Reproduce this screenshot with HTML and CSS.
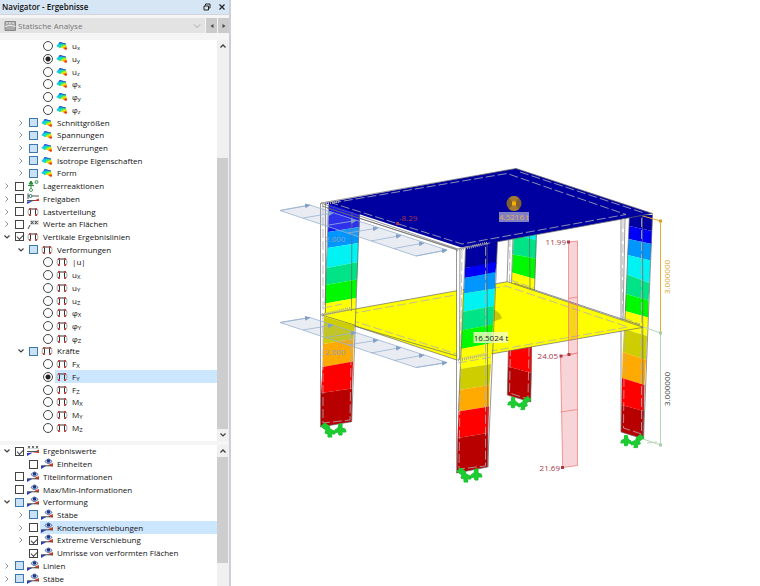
FILE: index.html
```html
<!DOCTYPE html>
<html lang="de">
<head>
<meta charset="utf-8">
<title>Navigator - Ergebnisse</title>
<link rel="stylesheet" href="styles.css">
</head>
<body>
<svg class="defs" aria-hidden="true">
  <defs>
    <linearGradient id="rainbow" x1="0.2" y1="0" x2="0.8" y2="1">
      <stop offset="0.1" stop-color="#1a30e0"/><stop offset="0.25" stop-color="#00c8f0"/><stop offset="0.45" stop-color="#20e880"/><stop offset="0.65" stop-color="#f0f000"/><stop offset="0.9" stop-color="#f03000"/>
    </linearGradient>
    <symbol id="i-surf" viewBox="0 0 12 12"><path d="M0.5 6 4 2 10 4 11 9 10 10 6.500 8 4 8z" fill="url(#rainbow)"/><path d="M3.500 2.500 10 4" stroke="#3050d0"/><path d="M0.500 6 3 4.500 5 7 4 8z" fill="#10d0e8"/></symbol>
    <symbol id="i-frame" viewBox="0 0 12 12"><path d="M3.500 9V3H8.500V9" fill="none" stroke="#333"/><path d="M1.500 3Q0.500 6 1.500 9M10.500 3Q11.500 6 10.500 9" fill="none" stroke="#aaa"/><path d="M2 2h2v2H2zM8 2h2v2H8zM2 8h2v2H2zM8 8h2v2H8z" fill="#b84a4a"/></symbol>
    <symbol id="i-support" viewBox="0 0 12 12"><path d="M4 8V1M4 1 2 4h4zM1 5.500h6" stroke="#2b8a3e" fill="#2b8a3e"/><circle cx="9.500" cy="2" r="1.500" fill="#cfe8d4" stroke="#4c9a5c"/><circle cx="4" cy="10" r="1.500" fill="#fff" stroke="#4c9a5c"/></symbol>
    <symbol id="i-release" viewBox="0 0 12 12"><path d="M1 0.500V6M1 3H12M0 7.500H12" stroke="#555" fill="none"/><circle cx="3.500" cy="3" r="1.500" fill="#fff" stroke="#2b7a70"/><path d="M0 11V8.500L6 8z" fill="#2040d0"/><path d="M6 8 12 5.500V8z" fill="#d03020"/></symbol>
    <symbol id="i-values" viewBox="0 0 12 12"><path d="M3 2H12V7H3z" fill="#ddd"/><path d="M4 3 6.500 6M6.500 3 4 6M8 3 10.500 6M10.500 3 8 6M3 7 1 11" stroke="#444" fill="none"/></symbol>
    <symbol id="i-result" viewBox="0 0 12 12"><path d="M0 11V8L6 7.500z" fill="#2438d0"/><path d="M6 7.500 12 5V8.500z" fill="#e03818"/><path d="M0 7.800H12" stroke="#555"/><path d="M4 3.500Q7.500-1.500 11 3.500 7.500 7.500 4 3.500z" fill="#dce4f4" stroke="#5068a0"/><circle cx="7.500" cy="3" r="1.800" fill="#203888"/></symbol>
    <symbol id="i-xxx" viewBox="0 0 12 12"><path d="M0 11V8L6 7.500z" fill="#2438d0"/><path d="M6 7.500 12 4.500V8z" fill="#e03818"/><path d="M0 6.500H12" stroke="#555"/><path d="M1 1 3 3.500M3 1 1 3.500M5 1 7 3.500M7 1 5 3.500M9 1 11 3.500M11 1 9 3.500" stroke="#333" stroke-width="0.800"/></symbol>
    <symbol id="i-right" viewBox="0 0 8 8"><path d="M2.500 1.500 5 4 2.500 6.500" fill="none" stroke="#909090"/></symbol>
    <symbol id="i-down" viewBox="0 0 8 8"><path d="M1.500 2.500 4 5 6.500 2.500" fill="none" stroke="#404040" stroke-width="1.200"/></symbol>
    <symbol id="i-up" viewBox="0 0 8 8"><path d="M1.500 5.500 4 3 6.500 5.500" fill="none" stroke="#404040" stroke-width="1.300"/></symbol>
    <symbol id="s-support" viewBox="0 0 30 16"><g fill="#1ccc30" stroke="#16c42c"><path d="M1 3 5 0 9 3 10 6 14 8 15 11 11 11 12 14 8 14 8 11 5 10 6 7 3 5z"/><path d="M19 1 22 1 22 5 25 6 26 9 22 9 22 12 19 12 18 9 14 10 15 7 18 5z"/></g></symbol>
    <marker id="head" markerUnits="userSpaceOnUse" markerWidth="6" markerHeight="6" refX="5" refY="2.500" orient="auto"><path d="M0 0 5.500 2.500 0 5z" fill="#829fc4"/></marker>
  </defs>
</svg>

<main class="app">
  <aside class="panel">
    <header class="title"><h1>Navigator - Ergebnisse</h1>
      <button type="button" aria-label="Andocken"><svg viewBox="0 0 8 8"><path d="M2.500 2.500V1H7V5H5.500M1 3H5.500V7H1z" fill="none" stroke="#222"/></svg></button>
      <button type="button" aria-label="Schließen"><svg viewBox="0 0 8 8"><path d="M1.500 1.500 6.500 6.500M6.500 1.500 1.500 6.500" stroke="#222" stroke-width="1.200"/></svg></button>
    </header>
    <div class="toolbar">
      <div class="combo">
        <svg class="combo-icon" viewBox="0 0 12 12"><path d="M1 1.500H11.500V10.500H1z" fill="#aaa" stroke="#888"/><path d="M1 6.500Q6 4 11.500 6.500M3 2V4M6 2V4M9 2V4" stroke="#eee" fill="none"/></svg>
        <select aria-label="Analyse"><option>Statische Analyse</option></select>
        <svg class="combo-arrow" viewBox="0 0 8 8"><path d="M1 2.500 4 5.500 7 2.500" fill="none" stroke="#aaa"/></svg>
      </div>
      <button type="button" class="step" aria-label="Zurück"><svg viewBox="0 0 8 8"><path d="M5.500 2V6L2.500 4z"/></svg></button>
      <button type="button" class="step" aria-label="Weiter"><svg viewBox="0 0 8 8"><path d="M2.500 2V6L5.500 4z"/></svg></button>
    </div>

    <section class="pane upper">
      <div class="tree">
        <div class="row l2"><label><input type="radio" name="d"><span><svg><use href="#i-surf"/></svg><b>u<sub>x</sub></b></span></label></div>
        <div class="row l2"><label><input type="radio" name="d" checked><span><svg><use href="#i-surf"/></svg><b>u<sub>y</sub></b></span></label></div>
        <div class="row l2"><label><input type="radio" name="d"><span><svg><use href="#i-surf"/></svg><b>u<sub>z</sub></b></span></label></div>
        <div class="row l2"><label><input type="radio" name="d"><span><svg><use href="#i-surf"/></svg><b>φ<sub>x</sub></b></span></label></div>
        <div class="row l2"><label><input type="radio" name="d"><span><svg><use href="#i-surf"/></svg><b>φ<sub>y</sub></b></span></label></div>
        <div class="row l2"><label><input type="radio" name="d"><span><svg><use href="#i-surf"/></svg><b>φ<sub>z</sub></b></span></label></div>
        <div class="row l1"><svg class="tw"><use href="#i-right"/></svg><label><input type="checkbox" class="part"><span><svg><use href="#i-surf"/></svg>Schnittgrößen</span></label></div>
        <div class="row l1"><svg class="tw"><use href="#i-right"/></svg><label><input type="checkbox" class="part"><span><svg><use href="#i-surf"/></svg>Spannungen</span></label></div>
        <div class="row l1"><svg class="tw"><use href="#i-right"/></svg><label><input type="checkbox" class="part"><span><svg><use href="#i-surf"/></svg>Verzerrungen</span></label></div>
        <div class="row l1"><svg class="tw"><use href="#i-right"/></svg><label><input type="checkbox" class="part"><span><svg><use href="#i-surf"/></svg>Isotrope Eigenschaften</span></label></div>
        <div class="row l1"><svg class="tw"><use href="#i-right"/></svg><label><input type="checkbox" class="part"><span><svg><use href="#i-surf"/></svg>Form</span></label></div>
        <div class="row"><svg class="tw"><use href="#i-right"/></svg><label><input type="checkbox"><span><svg><use href="#i-support"/></svg>Lagerreaktionen</span></label></div>
        <div class="row"><svg class="tw"><use href="#i-right"/></svg><label><input type="checkbox"><span><svg><use href="#i-release"/></svg>Freigaben</span></label></div>
        <div class="row"><svg class="tw"><use href="#i-right"/></svg><label><input type="checkbox"><span><svg><use href="#i-frame"/></svg>Lastverteilung</span></label></div>
        <div class="row"><svg class="tw"><use href="#i-right"/></svg><label><input type="checkbox"><span><svg><use href="#i-values"/></svg>Werte an Flächen</span></label></div>
        <div class="row"><svg class="tw"><use href="#i-down"/></svg><label><input type="checkbox" checked><span><svg><use href="#i-frame"/></svg>Vertikale Ergebnislinien</span></label></div>
        <div class="row l1"><svg class="tw"><use href="#i-down"/></svg><label><input type="checkbox" class="part"><span><svg><use href="#i-frame"/></svg>Verformungen</span></label></div>
        <div class="row l2"><label><input type="radio" name="r0"><span><svg><use href="#i-frame"/></svg>|u|</span></label></div>
        <div class="row l2"><label><input type="radio" name="r"><span><svg><use href="#i-frame"/></svg><b>u<sub>X</sub></b></span></label></div>
        <div class="row l2"><label><input type="radio" name="r"><span><svg><use href="#i-frame"/></svg><b>u<sub>Y</sub></b></span></label></div>
        <div class="row l2"><label><input type="radio" name="r"><span><svg><use href="#i-frame"/></svg><b>u<sub>Z</sub></b></span></label></div>
        <div class="row l2"><label><input type="radio" name="r"><span><svg><use href="#i-frame"/></svg><b>φ<sub>X</sub></b></span></label></div>
        <div class="row l2"><label><input type="radio" name="r"><span><svg><use href="#i-frame"/></svg><b>φ<sub>Y</sub></b></span></label></div>
        <div class="row l2"><label><input type="radio" name="r"><span><svg><use href="#i-frame"/></svg><b>φ<sub>Z</sub></b></span></label></div>
        <div class="row l1"><svg class="tw"><use href="#i-down"/></svg><label><input type="checkbox" class="part"><span><svg><use href="#i-frame"/></svg>Kräfte</span></label></div>
        <div class="row l2"><label><input type="radio" name="r"><span><svg><use href="#i-frame"/></svg><b>F<sub>X</sub></b></span></label></div>
        <div class="row l2 selected"><label><input type="radio" name="r" checked><span><svg><use href="#i-frame"/></svg><b>F<sub>Y</sub></b></span></label></div>
        <div class="row l2"><label><input type="radio" name="r"><span><svg><use href="#i-frame"/></svg><b>F<sub>Z</sub></b></span></label></div>
        <div class="row l2"><label><input type="radio" name="r"><span><svg><use href="#i-frame"/></svg><b>M<sub>X</sub></b></span></label></div>
        <div class="row l2"><label><input type="radio" name="r"><span><svg><use href="#i-frame"/></svg><b>M<sub>Y</sub></b></span></label></div>
        <div class="row l2"><label><input type="radio" name="r"><span><svg><use href="#i-frame"/></svg><b>M<sub>Z</sub></b></span></label></div>
      </div>
      <div class="scroll"><svg><use href="#i-up"/></svg><div class="track"><div class="thumb"></div></div><svg><use href="#i-down"/></svg></div>
    </section>

    <section class="pane lower">
      <div class="tree">
        <div class="row"><svg class="tw"><use href="#i-down"/></svg><label><input type="checkbox" checked><span><svg><use href="#i-xxx"/></svg>Ergebniswerte</span></label></div>
        <div class="row l1"><i class="tw"></i><label><input type="checkbox"><span><svg><use href="#i-result"/></svg>Einheiten</span></label></div>
        <div class="row"><i class="tw"></i><label><input type="checkbox"><span><svg><use href="#i-result"/></svg>Titelinformationen</span></label></div>
        <div class="row"><i class="tw"></i><label><input type="checkbox"><span><svg><use href="#i-result"/></svg>Max/Min-Informationen</span></label></div>
        <div class="row"><svg class="tw"><use href="#i-down"/></svg><label><input type="checkbox" class="part"><span><svg><use href="#i-result"/></svg>Verformung</span></label></div>
        <div class="row l1"><svg class="tw"><use href="#i-right"/></svg><label><input type="checkbox" class="part"><span><svg><use href="#i-result"/></svg>Stäbe</span></label></div>
        <div class="row l1 selected"><svg class="tw"><use href="#i-right"/></svg><label><input type="checkbox"><span><svg><use href="#i-result"/></svg>Knotenverschiebungen</span></label></div>
        <div class="row l1"><svg class="tw"><use href="#i-right"/></svg><label><input type="checkbox" checked><span><svg><use href="#i-result"/></svg>Extreme Verschiebung</span></label></div>
        <div class="row l1"><i class="tw"></i><label><input type="checkbox" checked><span><svg><use href="#i-result"/></svg>Umrisse von verformten Flächen</span></label></div>
        <div class="row"><svg class="tw"><use href="#i-right"/></svg><label><input type="checkbox" class="part"><span><svg><use href="#i-result"/></svg>Linien</span></label></div>
        <div class="row"><svg class="tw"><use href="#i-right"/></svg><label><input type="checkbox" class="part"><span><svg><use href="#i-result"/></svg>Stäbe</span></label></div>
      </div>
      <div class="scroll"><svg><use href="#i-up"/></svg><div class="track"><div class="thumb"></div></div></div>
    </section>
  </aside>

  <svg class="scene" viewBox="231 0 529 586" preserveAspectRatio="xMinYMin meet" role="img" aria-label="Tragwerksmodell">
    <!-- rear column -->
    <g>
      <path d="M513 230 537 228 536.500 240 513.500 236z" fill="#00f0f0"/>
      <path d="M513.500 235 536.500 240 536 258.500 513 254.500z" fill="#00e487"/>
      <path d="M513 254.500 536 258.500 535 279 512 272.500z" fill="#00f800"/>
      <path d="M512 272.500 535 279 534 300 511 290z" fill="#ff0"/>
      <path d="M508.500 340H532L531.500 373 508 366.500z" fill="#f00"/>
      <path d="M508 366.500 531.500 373 530.700 402 507.300 395z" fill="#b90000"/>
      <path class="edge" d="M508.500 238 507 283M513 236 511.500 284M529.500 230 530 290M536.500 232 534.500 290M508.500 345 507.300 395 530.700 402 531.500 345"/>
      <path class="dash" d="M510 238 509.500 282M510.500 347 509.500 393 528 399 529 348"/>
    </g>
    <!-- right column -->
    <g>
      <path d="M629.300 215H652.500L652 231 629 226z" fill="#0000a0"/>
      <path d="M629 226 652 231 651.500 244 628.500 239z" fill="#0000f8"/>
      <path d="M628.500 239 651.500 244 650.500 260.500 627.500 255z" fill="#0096ff"/>
      <path d="M627.500 255 650.500 260.500 649.500 283 627 274.500z" fill="#00f2f2"/>
      <path d="M627 274.500 649.500 283 648.500 300.500 626 294z" fill="#00e487"/>
      <path d="M626 294 648.500 300.500 648 317.500 625 311z" fill="#00f800"/>
      <path d="M625 311 648 317.500 647 336 624 329z" fill="#ff0"/>
      <path d="M624 329 647 336 646 360 622.700 352z" fill="#cdcd00"/>
      <path d="M622.700 352 646 360 644.500 385 622 378z" fill="#ffaa00"/>
      <path d="M622 378 644.500 385 644 411 621.500 405z" fill="#f00"/>
      <path d="M621.500 405 644 411 643.500 439 621 432z" fill="#b90000"/>
      <path class="edge" d="M621 218 621 432 643.500 439 652.500 214M625 218 623 320M629.300 218 625 320M642.500 216 643 435"/>
      <path class="dash" d="M623 220 622.500 320M641.500 218 641.500 434 623.500 428 624.500 330"/>
    </g>
    <!-- intermediate slab -->
    <path d="M321.700 315 507.300 281.700 643.300 327.300 456.700 360z" fill="#ff0"/>
    <path class="edge" d="M321.700 315 507.300 281.700 643.300 327.300 456.700 360zM324 317 462 357.500M514 283 640 325"/>
    <path class="dash" d="M338 316 506 286 628 327 463 356zM510 280 534 288M624 318 640 324"/>
    <path d="M492 309Q501 312 502 318.500L492 322z" fill="#c8c800"/>
    <!-- left column -->
    <g>
      <path d="M329 203 360 211 359.500 227 328 232z" fill="#1414f5"/>
      <path d="M328 232 359.500 227 358.500 243 327.500 248z" fill="#0096ff"/>
      <path d="M327.500 248 358.500 243 358 262 326.500 268z" fill="#00f2f2"/>
      <path d="M326.500 268 358 262 357 279.500 325.500 285z" fill="#00e487"/>
      <path d="M325.500 285 357 279.500 356 298 325 303.500z" fill="#00f800"/>
      <path d="M325 303.500 356 298 354.500 326 324 317z" fill="#ff0"/>
      <path d="M324 317 354.500 326 353.500 339 323 344z" fill="#cdcd00"/>
      <path d="M323 344 353.500 339 353 361.500 322.500 367z" fill="#ffaa00"/>
      <path d="M322.500 367 353 361.500 352 388.500 321 393z" fill="#f00"/>
      <path d="M321 393 352 388.500 351.700 421.700 320.700 427z" fill="#b90000"/>
      <path class="edge" d="M320.500 203V427L351.700 421.700 359.500 212M328.500 205 325 305M325.500 203 325.500 313M352 207 351.500 311M321.700 315 355 309M321.700 315 356 325.500"/>
      <path class="dash" d="M323 205V423L350 420 351.500 330M323.500 308 342 304"/>
    </g>
    <!-- roof slab -->
    <path d="M325 203 516 168.500 652.500 213.500 463 248z" fill="#0000a0"/>
    <path class="edge" d="M321 203 516 168.500 652.500 213.500 458 249zM322 206 457 250M327 208 456 249"/>
    <path class="dash" d="M332 203 507 173.500 626 214.500 462 244zM520 172 644 213"/>
    <!-- front column -->
    <g>
      <path d="M465.500 248 497.500 241 496.500 264 465 268z" fill="#0000a0"/>
      <path d="M465 268 496.500 262 495.500 273 464.500 278z" fill="#0000f8"/>
      <path d="M464.500 278 495.500 272 495 288.500 464 293.500z" fill="#0096ff"/>
      <path d="M464 293.500 495 288.500 494 306 463 312z" fill="#00f2f2"/>
      <path d="M463 312 494 306 493 324.500 462 330.500z" fill="#00e487"/>
      <path d="M462 330.500 493 324.500 492 343 461 349z" fill="#00f800"/>
      <path d="M461 349 492 343 491 364 460 369z" fill="#ff0"/>
      <path d="M460 369 491 364 489.500 385 459 390z" fill="#cdcd00"/>
      <path d="M459 390 489.500 385 489 406.500 458.500 411.500z" fill="#ffaa00"/>
      <path d="M458.500 411.500 489 406.500 488 433 457.500 438z" fill="#f00"/>
      <path d="M457.500 438 488 433 487.700 467 457 473z" fill="#b90000"/>
      <path d="M457 250H464L459 385 457.500 425z" fill="#fff"/>
      <path class="edge" d="M456.500 249V473L487.700 467 497.500 242M460 249 459.500 360M465.500 248 458.500 411M487 243 488 467"/>
      <path class="dash" d="M462 250 459 469 485.500 466 485.500 245M458 363 492 357M460 248 490 243"/>
      <path class="scribble" d="M457 250 488 243M458 360 488 354M322 204 340 201M322 315 352 308"/>
    </g>
    <!-- wind loads -->
    <g class="load">
      <path class="area" d="M280 210.500 310 205 447 250 416 256z"/>
      <path marker-end="url(#head)" d="M280 210.500 310 205"/><path marker-end="url(#head)" d="M303 218 333 213"/><path marker-end="url(#head)" d="M326 225.500 356 220.500"/><path marker-end="url(#head)" d="M348 233 378 228"/><path marker-end="url(#head)" d="M371 241 401 235.500"/><path marker-end="url(#head)" d="M394 248.500 424 243"/><path marker-end="url(#head)" d="M416 256 447 250"/>
    </g>
    <g class="load">
      <path class="area" d="M280 322.500 310 317.500 447 362.500 416 367.500z"/>
      <path marker-end="url(#head)" d="M280 322.500 310 317.500"/><path marker-end="url(#head)" d="M303 330 333 325"/><path marker-end="url(#head)" d="M326 337.500 356 332.500"/><path marker-end="url(#head)" d="M348 345 378 340"/><path marker-end="url(#head)" d="M371 353 401 347.500"/><path marker-end="url(#head)" d="M394 360.500 424 355"/><path marker-end="url(#head)" d="M416 367.500 447 362.500"/>
    </g>
    <text class="blue" x="325" y="242">2.000</text>
    <text class="blue" x="325" y="355">2.000</text>
    <!-- result line -->
    <path class="force" d="M568.500 242 577.500 241V353L568.500 355zM560.500 356 577.500 353V465.500L562.700 467.500zM568.500 298.500 577.500 297M560.500 412 577.500 409.500"/>
    <path d="M567 240.500h3v3h-3zM559.500 354.500h3v3h-3zM567.500 353h3v3h-3zM561 466h3v3h-3zM396 222h3v3h-3z" fill="#a83a44"/>
    <text class="red" x="566" y="245" text-anchor="end">11.99</text>
    <text class="red" x="558" y="359" text-anchor="end">24.05</text>
    <text class="red" x="560" y="471" text-anchor="end">21.69</text>
    <text class="red" x="399" y="221">-8.29</text>
    <!-- storey masses -->
    <circle cx="514" cy="203.500" r="7.500" fill="#80602f"/><path d="M514 203.500 509 198A7.500 7.500 0 0 1 519 198zM514 203.500 519 209A7.500 7.500 0 0 1 509 209z" fill="#a47a30"/><path d="M512 201.500h4v4h-4z" fill="#f5b000"/>
    <path d="M499 212H529V222H499z" fill="#8080c4"/>
    <text x="514" y="220" text-anchor="middle" fill="#e0ae50">4.5216 t</text>
    <path d="M473.500 332H508V343H473.500z" fill="#f4ffc4" fill-opacity="0.800"/>
    <text x="491" y="341" text-anchor="middle" fill="#222">16.5024 t</text>
    <!-- dimensions -->
    <path d="M643 216 660.500 221V333" fill="none" stroke="#e4ae38"/><path d="M659 219.500h3v3h-3z" fill="#dba020"/>
    <path d="M643 327 660.500 333V445L643 439M647 443 657 442" fill="none" stroke="#b7d5b9"/><path d="M659 331.500h3v3h-3zM659 443.500h3v3h-3z" fill="#a8cbaa"/>
    <text transform="translate(670 277) rotate(-90)" text-anchor="middle" fill="#dba020">3.000000</text>
    <text transform="translate(670 389) rotate(-90)" text-anchor="middle" fill="#333">3.000000</text>
    <!-- supports -->
    <use href="#s-support" x="320" y="423" width="30" height="16"/>
    <use href="#s-support" x="456" y="468" width="30" height="16"/>
    <use href="#s-support" transform="translate(532 396)  scale(-1 1)" width="28" height="16"/>
    <use href="#s-support" transform="translate(645 434) scale(-1 1)" width="28" height="16"/>
  </svg>
</main>
</body>
</html>
```
FILE: styles.css
```css
* { box-sizing: border-box; }
body { margin: 0; background: #fff; color: #111; font: 8px/12px "Open Sans", "Noto Sans", sans-serif; }
button, select { font: inherit; border: 0; padding: 0; margin: 0; }
.defs { position: absolute; width: 0; height: 0; }
.app { display: flex; height: 100vh; }

.panel { flex: 0 0 231px; display: flex; flex-direction: column; background: #f5f5f5; border-right: 2px solid #cdcddc; }
.title { display: flex; align-items: center; height: 14px; background: #d7e6f4; padding: 0 3px 0 2px; gap: 7px; }
.title h1 { flex: 1; margin: 0; font-size: 8px; font-weight: 600; }
.title button { width: 8px; height: 8px; background: none; }
.title svg { display: block; width: 8px; height: 8px; }

.toolbar { display: flex; gap: 1px; height: 26px; padding: 3px 0 7px 0; border-top: 1px solid #d4d4dc; }
.combo { flex: 1; display: flex; align-items: center; gap: 2px; padding: 0 4px 0 4px; background: #e3e3e3; }
.combo select { flex: 1; appearance: none; background: none; color: #777; }
.combo-icon { width: 12px; height: 12px; }
.combo-arrow { width: 8px; height: 8px; }
.step { width: 11px; background: #cbcbcb; }
.step svg { display: block; width: 8px; height: 8px; margin: auto; fill: #444; }

.pane { display: flex; min-height: 0; background: #fff; }
.upper { flex: 401; margin-bottom: 4px; }
.lower { flex: 141; }
.tree { flex: 1; display: grid; grid-auto-rows: 1fr; }
.upper .tree { padding-bottom: 7px; }
.lower .tree { padding-bottom: 1px; }
.row { display: flex; align-items: center; min-height: 0; }
.l1 { padding-left: 14px; }
.l2 { padding-left: 42px; }
.tw { flex: none; width: 8px; height: 8px; margin: 0 4px 0 3px; }
.row label { flex: 1; display: flex; align-items: center; gap: 2px; height: 100%; }
.row span { flex: 1; display: flex; align-items: center; gap: 4px; height: 100%; padding-left: 1px; white-space: nowrap; }
.row span svg { flex: none; width: 12px; height: 12px; }
.row b { font-weight: 500; }
sub { font-size: 6px; line-height: 1px; vertical-align: -1px; }
.selected span { background: #cce6ff; }

input { flex: none; appearance: none; width: 9px; height: 9px; margin: 0; border: 1px solid #444; background: #fff; }
input.part { background: #cae1f7; border-color: #3a78b0; }
input[type="checkbox"]:checked::after { content: ""; display: block; width: 6px; height: 3px; border: solid #444; border-width: 0 0 1px 1px; transform: translate(1px, 1px) rotate(-45deg); }
input[type="radio"] { width: 10px; height: 10px; margin-left: 1px; border-radius: 50%; }
input[type="radio"]:checked { background: radial-gradient(circle, #222 0 2px, #fff 3px); }

.scroll { width: 12px; padding-right: 1px; display: flex; flex-direction: column; background: #f0f0f0; }
.scroll > svg { width: 8px; height: 8px; margin: 2px; flex: none; }
.track { flex: 1; display: flex; flex-direction: column; }
.thumb { background: #cdcdcd; }
.upper .thumb { margin-top: auto; flex: 0 0 72%; }
.lower .thumb { flex: 0 0 82%; }

.scene { flex: 1; min-width: 0; height: 100%; font-size: 8px; }
.edge { fill: none; stroke: #686868; stroke-width: 0.7; }
.dash { fill: none; stroke: #b0b0b8; stroke-width: 0.8; stroke-dasharray: 9 3; }
.scribble { fill: none; stroke: #aaa; stroke-width: 3; stroke-dasharray: 1 1; }
.load { fill: none; stroke: #9bb3d0; stroke-width: 0.8; }
.load .area { fill: #8fa5c2; fill-opacity: 0.2; }
.force { fill: #dc5a64; fill-opacity: 0.26; stroke: #f08080; stroke-width: 0.8; }
.blue { fill: #86a2c0; }
.red { fill: #a83a44; }
```
